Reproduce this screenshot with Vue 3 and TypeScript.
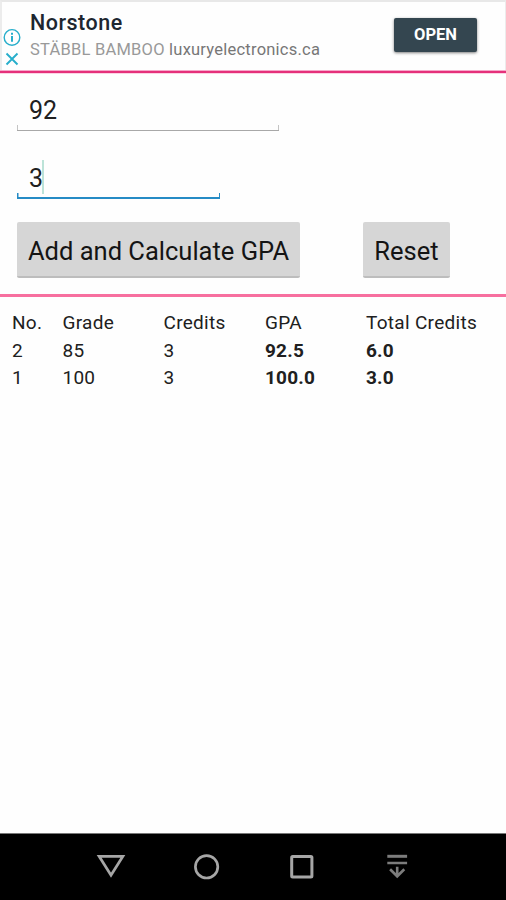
<script setup lang="ts">
import { ref } from 'vue'

interface Entry {
  no: number
  grade: string
  credits: string
  gpa: string
  total: string
}

const grade = ref('92')
const credits = ref('3')
const entries = ref<Entry[]>([
  { no: 2, grade: '85', credits: '3', gpa: '92.5', total: '6.0' },
  { no: 1, grade: '100', credits: '3', gpa: '100.0', total: '3.0' },
])
</script>

<template>
  <div class="screen">
    <header class="ad">
      <div class="ad-marks">
        <svg width="18" height="18" viewBox="0 0 18 18" fill="none" stroke="#27aecb">
          <circle cx="9" cy="9.4" r="7.8" stroke-width="1.4" />
          <path d="M9 8.1v5.6M9 4.7v2" stroke-width="2" />
        </svg>
        <svg class="close" width="14" height="14" viewBox="0 0 14 14" fill="none" stroke="#27aecb" stroke-width="1.9">
          <path d="M1.5 1.5l11 11M12.5 1.5l-11 11" />
        </svg>
      </div>
      <div class="ad-copy">
        <div class="ad-title">Norstone</div>
        <div class="ad-sub"><span class="tagline">STÄBBL BAMBOO</span> <span class="site">luxuryelectronics.ca</span></div>
      </div>
      <button class="open">OPEN</button>
    </header>

    <main class="form">
      <div class="field grade"><span>{{ grade }}</span></div>
      <div class="field credits"><span>{{ credits }}</span><i class="caret"></i></div>
      <div class="actions">
        <button class="btn add">Add and Calculate GPA</button>
        <button class="btn reset">Reset</button>
      </div>
    </main>

    <section class="results">
      <div class="row head">
        <span>No.</span><span>Grade</span><span>Credits</span><span>GPA</span><span>Total Credits</span>
      </div>
      <div v-for="e in entries" :key="e.no" class="row">
        <span>{{ e.no }}</span><span>{{ e.grade }}</span><span>{{ e.credits }}</span><b>{{ e.gpa }}</b><b>{{ e.total }}</b>
      </div>
    </section>

    <nav class="navbar">
      <svg width="32" height="32" viewBox="0 0 32 32" fill="none" stroke="#a6a6a6" stroke-width="2.8">
        <path d="M4.2 5.4h23.600L16 24.200z" />
      </svg>
      <svg width="32" height="32" viewBox="0 0 32 32" fill="none" stroke="#a6a6a6" stroke-width="2.7">
        <circle cx="15.6" cy="15.8" r="11.2" />
      </svg>
      <svg width="32" height="32" viewBox="0 0 32 32" fill="none" stroke="#a6a6a6" stroke-width="3">
        <rect x="5.7" y="5.5" width="20.200" height="20.4" rx="1" />
      </svg>
      <svg width="32" height="32" viewBox="0 0 32 32" fill="none" stroke="#7c7c7c" stroke-width="2.6">
        <path d="M5.3 5.3h19.8" stroke-width="3" />
        <path d="M5.3 12h19.8M15.2 15.8v10M8.1 18.3l7.1 7 7.1-7" />
      </svg>
    </nav>
  </div>
</template>

<style>
body {
  margin: 0;
  background: #fff;
}
</style>

<style scoped>
.screen {
  width: 506px;
  height: 900px;
  box-sizing: border-box;
  display: flex;
  flex-direction: column;
  overflow: hidden;
  background: #fefefe;
  color: #202020;
  font-family: Roboto, sans-serif;
}
button {
  font-family: inherit;
  border: 0;
  padding: 0;
}
svg {
  display: block;
}
.ad {
  height: 71px;
  box-sizing: border-box;
  display: flex;
  border-top: 2px solid #e8e8e8;
  border-left: 2px solid #ececec;
  border-right: 1px solid #ececec;
}
.ad-marks {
  width: 28px;
  padding: 26px 0 0 1px;
  box-sizing: border-box;
}
.close {
  margin: 6px 0 0 2px;
}
.ad-copy {
  width: 364px;
  white-space: nowrap;
}
.ad-title {
  margin-top: 8px;
  font-size: 21.5px;
  line-height: 26px;
  font-weight: 500;
  letter-spacing: 0.5px;
  color: #1d2630;
}
.ad-sub {
  margin-top: 4px;
  font-size: 16.5px;
  line-height: 20px;
  letter-spacing: 0.23px;
  color: #777;
}
.tagline {
  color: #999;
}
.open {
  width: 83px;
  height: 34px;
  margin-top: 16px;
  padding-bottom: 2px;
  border-radius: 2px;
  background: #344650;
  box-shadow: 0 1px 3px rgba(0, 0, 0, 0.5);
  color: #fff;
  font-size: 16.5px;
  font-weight: 700;
}
.form {
  height: 226px;
  box-sizing: border-box;
  padding: 18px 17px 0;
  border-top: 2px solid #e5307a;
  border-bottom: 3px solid #f76f9f;
  box-shadow: 0 -1px 0 #f6a9cb, inset 0 1px 0 #fbd3e4;
}
.field {
  display: flex;
  align-items: center;
  box-sizing: border-box;
  padding-left: 12px;
  font-size: 25px;
}
.grade {
  width: 262px;
  height: 40px;
  border-bottom: 1px solid #a8a8a8;
  background: linear-gradient(#c4c4c4, #c4c4c4) left bottom / 1px 5px no-repeat,
    linear-gradient(#c4c4c4, #c4c4c4) right bottom / 1px 5px no-repeat;
}
.credits {
  width: 203px;
  height: 41px;
  margin-top: 27px;
  padding-top: 1px;
  border-bottom: 2px solid #258bc5;
  background: linear-gradient(#258bc5, #258bc5) left bottom / 1.5px 4px no-repeat,
    linear-gradient(#258bc5, #258bc5) right bottom / 1.5px 4px no-repeat;
}
.caret {
  width: 2px;
  height: 34px;
  margin: -3px 0 0 -1px;
  background: #bce3d8;
}
.actions {
  display: flex;
  gap: 63px;
  margin-top: 23px;
}
.btn {
  height: 56px;
  padding-top: 3px;
  border-radius: 2px;
  background: #d6d6d6;
  border-bottom: 2px solid #bdbdbd;
  box-sizing: border-box;
  color: #141414;
  font-size: 25.5px;
  white-space: nowrap;
}
.add {
  width: 283px;
}
.reset {
  width: 87px;
}
.results {
  flex: 1;
  padding: 12px 0 0 12px;
}
.row {
  display: grid;
  grid-template-columns: 50.5px 101px 101.5px 101px 1fr;
  height: 27.5px;
  font-size: 19px;
  line-height: 28px;
  letter-spacing: 0.2px;
  white-space: nowrap;
}
.head {
  letter-spacing: 0.3px;
}
.row b {
  font-weight: 700;
}
.navbar {
  height: 67px;
  box-sizing: border-box;
  border-top: 1px solid #777;
  background: #000;
  display: flex;
  gap: 63.5px;
  padding: 17px 0 0 95px;
}
</style>
